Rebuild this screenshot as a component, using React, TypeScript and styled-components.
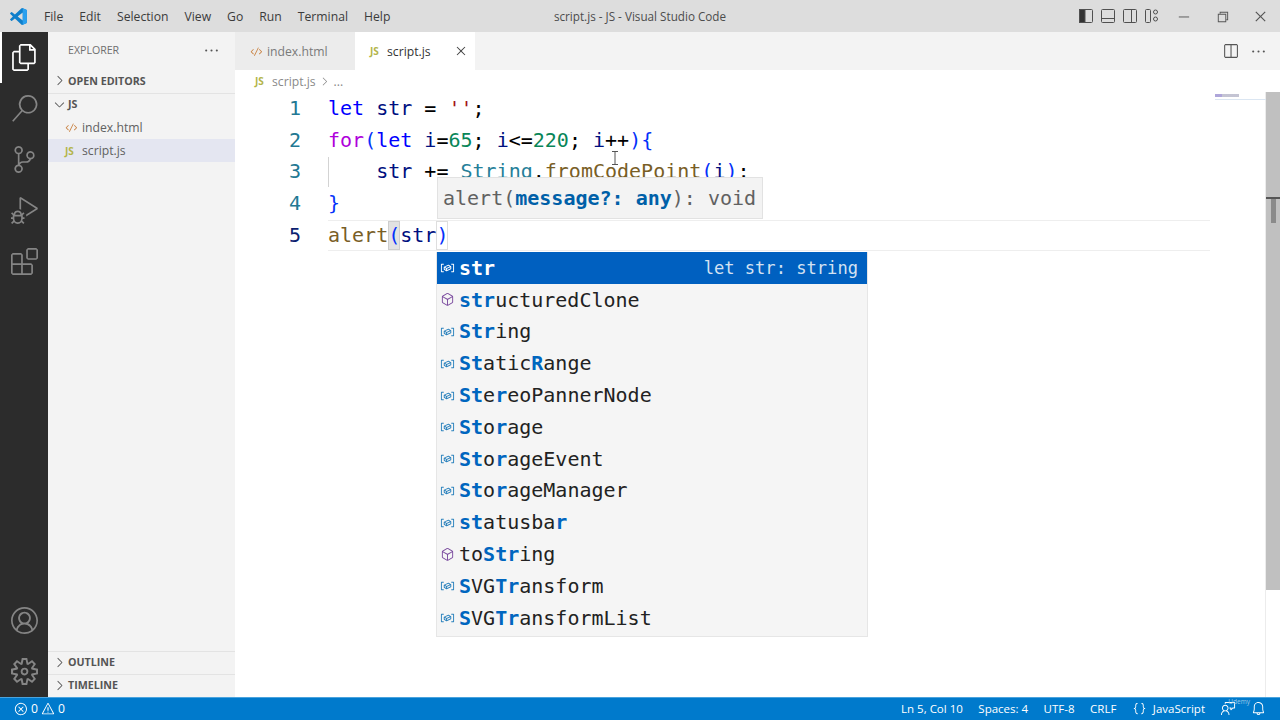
import React from "react"
import styled, { createGlobalStyle } from "styled-components"
import {
  VscFiles,
  VscSearch,
  VscSourceControl,
  VscDebugAlt,
  VscExtensions,
  VscAccount,
  VscSettingsGear,
  VscChevronRight,
  VscChevronDown,
  VscCode,
  VscClose,
  VscEllipsis,
  VscSplitHorizontal,
  VscChromeMinimize,
  VscChromeRestore,
  VscChromeClose,
  VscError,
  VscWarning,
  VscBell,
  VscFeedback,
  VscSymbolVariable,
  VscSymbolMethod,
  VscJson,
} from "react-icons/vsc"

const uiFont = `"Open Sans", "Noto Sans", sans-serif`
const codeFont = `"DejaVu Sans Mono", "Liberation Mono", monospace`
const lineHeight = 31.7

const GlobalStyle = createGlobalStyle`
  html, body {
    margin: 0;
    height: 100%;
    overflow: hidden;
    background: #fff;
    font-family: ${uiFont};
  }
  #root {
    height: 100%;
  }
`

const Shell = styled.div`
  display: grid;
  grid-template-rows: 32px 1fr 23px;
  width: 1280px;
  height: 720px;
  overflow: hidden;
`

const TitleBar = styled.div`
  position: relative;
  display: flex;
  align-items: center;
  background: #dddddd;
  color: #333;
  font-size: 12.2px;
`

const Logo = styled.svg`
  width: 17px;
  height: 17px;
  margin: 0 9px 0 10px;
  flex: none;
`

const MenuItem = styled.span`
  padding: 0 8px;
  color: #3b3b3b;
`

const WindowTitle = styled.div`
  position: absolute;
  left: 0;
  right: 0;
  text-align: center;
  color: #4c4c4c;
  font-size: 11.7px;
  pointer-events: none;
`

const TitleRight = styled.div`
  margin-left: auto;
  display: flex;
  align-items: center;
  color: #444;
`

const LayoutButton = styled.svg`
  width: 16px;
  height: 16px;
  margin-right: 6px;
  fill: none;
  stroke: #505050;
`

const WindowButton = styled.span`
  width: 38.5px;
  display: flex;
  justify-content: center;
  font-size: 15px;
  color: #555;
  &:first-of-type {
    margin-left: -1px;
  }
`

const Main = styled.div`
  display: flex;
  min-height: 0;
`

const ActivityBar = styled.div`
  width: 48px;
  flex: none;
  background: #2c2c2c;
  display: flex;
  flex-direction: column;
  justify-content: space-between;
`

const ActivityGroup = styled.div`
  display: flex;
  flex-direction: column;
`

const ActivityItem = styled.div<{ $active?: boolean }>`
  height: 51px;
  display: flex;
  align-items: center;
  justify-content: center;
  font-size: 27px;
  color: ${({ $active }) => ($active ? "#fff" : "#858585")};
  box-shadow: ${({ $active }) => ($active ? "inset 2px 0 0 #fff" : "none")};
`

const SideBar = styled.div`
  width: 187px;
  flex: none;
  background: #f3f3f3;
  display: flex;
  flex-direction: column;
  color: #616161;
`

const SideTitle = styled.div`
  height: 38px;
  box-sizing: border-box;
  padding: 0 15px 2px 20px;
  display: flex;
  align-items: center;
  justify-content: space-between;
  font-size: 10.6px;
  color: #6f6f6f;
  svg {
    font-size: 17px;
    color: #555;
  }
`

const SectionHeader = styled.div<{ $border?: boolean }>`
  height: 23px;
  display: flex;
  align-items: center;
  gap: 0;
  padding: 0 0 2px 3px;
  font-size: 10.7px;
  font-weight: 700;
  color: #555;
  border-top: ${({ $border }) => ($border ? "1px solid #e3e3e3" : "none")};
  box-sizing: border-box;
  svg {
    font-size: 15px;
    flex: none;
    width: 17px;
  }
`

const FileRow = styled.div<{ $active?: boolean }>`
  height: 23px;
  display: flex;
  align-items: center;
  padding-left: 17px;
  font-size: 12.2px;
  color: #616161;
  background: ${({ $active }) => ($active ? "#e4e6f1" : "transparent")};
`

const FileBadge = styled.span`
  width: 17px;
  display: inline-flex;
  align-items: center;
  font-size: 10px;
  font-weight: 700;
  flex: none;
`

const HtmlBadge = styled(FileBadge)`
  color: #c9803f;
  font-size: 13px;
`

const JsBadge = styled(FileBadge)`
  color: #b3b54a;
`

const SideSpacer = styled.div`
  flex: 1;
`

const Editor = styled.div`
  flex: 1;
  min-width: 0;
  display: flex;
  flex-direction: column;
  background: #fff;
`

const TabBar = styled.div`
  height: 38px;
  flex: none;
  display: flex;
  background: #f3f3f3;
`

const Tab = styled.div<{ $active?: boolean }>`
  width: 120px;
  box-sizing: border-box;
  padding-left: 15px;
  display: flex;
  align-items: center;
  font-size: 12.2px;
  background: ${({ $active }) => ($active ? "#fff" : "#ececec")};
  color: ${({ $active }) => ($active ? "#333" : "#7a7a7a")};
`

const TabClose = styled.span`
  margin-left: auto;
  margin-right: 6px;
  display: flex;
  font-size: 16px;
  color: #444;
`

const TabActions = styled.div`
  margin-left: auto;
  display: flex;
  align-items: center;
  gap: 11px;
  padding-right: 13px;
  font-size: 17px;
  color: #555;
`

const Breadcrumbs = styled.div`
  height: 22px;
  flex: none;
  display: flex;
  align-items: center;
  padding-left: 20px;
  font-size: 12.2px;
  color: #8a8a8a;
  svg {
    font-size: 13px;
    margin: 0 3px 0 2px;
  }
`

const CodeArea = styled.div`
  position: relative;
  flex: 1;
  min-height: 0;
  display: flex;
`

const CodeLines = styled.div`
  flex: 1;
  min-width: 0;
  padding-top: 1px;
  font-family: ${codeFont};
  font-size: 20px;
`

const LineRow = styled.div`
  display: flex;
  height: ${lineHeight}px;
  line-height: ${lineHeight}px;
  white-space: pre;
`

const LineNumber = styled.span<{ $active?: boolean }>`
  width: 66px;
  flex: none;
  text-align: right;
  color: ${({ $active }) => ($active ? "#0b216f" : "#237893")};
`

const LineCode = styled.span<{ $current?: boolean; $guide?: boolean }>`
  margin-left: 27px;
  flex: 1;
  box-sizing: border-box;
  margin-right: 56px;
  border: 1px solid ${({ $current }) => ($current ? "#eeeeee" : "transparent")};
  border-width: 1px 0;
  box-shadow: ${({ $guide }) => ($guide ? "inset 1px 0 0 #d3d3d3" : "none")};
  line-height: ${lineHeight - 2}px;
`

const Kw = styled.span`
  color: #0000ff;
`
const Ctl = styled.span`
  color: #af00db;
`
const Var = styled.span`
  color: #001080;
`
const Str = styled.span`
  color: #a31515;
`
const Num = styled.span`
  color: #098658;
`
const Cls = styled.span`
  color: #267f99;
`
const Fn = styled.span`
  color: #795e26;
`
const Brace = styled.span`
  color: #0431fa;
`
const Plain = styled.span`
  color: #000;
`
const MatchBrace = styled(Brace)`
  display: inline-block;
  height: 29px;
  background: #e2e2e2;
  box-shadow: inset 0 0 0 1px #cdcdcd;
`
const MatchBraceEnd = styled(Brace)`
  display: inline-block;
  height: 29px;
  box-shadow: inset 0 0 0 1px #dedede;
`

const ParamHint = styled.div`
  position: absolute;
  left: 202px;
  top: 85px;
  width: 326px;
  height: 42px;
  padding: 0 5px;
  display: flex;
  align-items: center;
  white-space: pre;
  background: #f3f3f3;
  border: 1px solid #e2e2e2;
  box-sizing: border-box;
  font-family: ${codeFont};
  font-size: 20px;
  color: #616161;
`

const ParamActive = styled.b`
  color: #0060a8;
`

const SuggestList = styled.div`
  position: absolute;
  left: 201px;
  top: 160px;
  width: 432px;
  padding-bottom: 2px;
  background: #f5f5f5;
  border: 1px solid #e6e6e6;
  border-top: 0;
  box-sizing: border-box;
  font-family: ${codeFont};
  font-size: 20px;
`

const SuggestRow = styled.div<{ $selected?: boolean }>`
  height: 31.8px;
  display: flex;
  align-items: center;
  white-space: pre;
  background: ${({ $selected }) => ($selected ? "#0060c0" : "transparent")};
  color: ${({ $selected }) => ($selected ? "#fff" : "#222")};
`

const SuggestIcon = styled.span<{ $selected?: boolean; $kind: "var" | "method" }>`
  width: 21px;
  margin-right: 1px;
  flex: none;
  display: flex;
  justify-content: center;
  font-size: 15px;
  color: ${({ $selected, $kind }) =>
    $selected ? "#fff" : $kind === "var" ? "#2b82bd" : "#7a4a9e"};
`

const Highlight = styled.b<{ $selected?: boolean }>`
  color: ${({ $selected }) => ($selected ? "#fff" : "#0066bf")};
`

const SuggestDetail = styled.span`
  margin-left: auto;
  padding-right: 9px;
  color: #d4e2f2;
  font-size: 17.1px;
`

const Minimap = styled.div`
  position: absolute;
  left: 980px;
  top: 0;
  width: 51px;
  height: 7px;
  border-bottom: 1px solid #dbe6f2;
`

const MinimapInk = styled.span`
  display: block;
  width: 24px;
  height: 3px;
  background: linear-gradient(90deg, #9a8fd0 0 30%, #b5b5c8 30% 100%);
  opacity: 0.8;
  margin-top: 2px;
`

const ScrollTrack = styled.div`
  width: 14px;
  flex: none;
  box-shadow: -1px 0 0 #ececec;
`

const OverviewRuler = styled.div`
  height: 498px;
  background: #c0c0c0;
  position: relative;
`

const RulerMark = styled.div`
  position: absolute;
  left: 0;
  right: 0;
  top: 105px;
  height: 2px;
  background: #555;
`

const RulerThumb = styled.div`
  position: absolute;
  left: 5px;
  width: 5px;
  top: 107px;
  height: 24px;
  background: #8a8a8a;
`

const IBeam = styled.svg`
  position: absolute;
  left: 376px;
  top: 59px;
  width: 8px;
  height: 14px;
`

const StatusBar = styled.div`
  position: relative;
  background: #007acc;
  color: #fff;
  display: flex;
  align-items: center;
  font-size: 11.5px;
  padding: 0 14px;
  box-shadow: inset 0 1px 0 #4aa3dd;
`

const StatusGroup = styled.div`
  display: flex;
  align-items: center;
  gap: 3px;
  font-size: 12.2px;
  svg {
    font-size: 14px;
  }
`

const StatusRight = styled.div`
  margin-left: auto;
  display: flex;
  align-items: center;
  gap: 15.5px;
  svg {
    font-size: 15px;
  }
`

const StatusIcon = styled.span`
  display: flex;
  align-items: center;
  gap: 6px;
`

const Watermark = styled.span`
  position: absolute;
  right: 30px;
  top: 0;
  font-size: 6.5px;
  color: #9cc9e8;
`

// "[st]r" style strings, brackets mark the matched letters
function renderMatch(label: string, selected?: boolean) {
  return label.split(/(\[[^\]]+\])/).map((part, i) =>
    part.startsWith("[") ? (
      <Highlight key={i} $selected={selected}>
        {part.slice(1, -1)}
      </Highlight>
    ) : (
      <span key={i}>{part}</span>
    ),
  )
}

const suggestions: { label: string; kind: "var" | "method" }[] = [
  { label: "[str]", kind: "var" },
  { label: "[str]ucturedClone", kind: "method" },
  { label: "[Str]ing", kind: "var" },
  { label: "[St]atic[R]ange", kind: "var" },
  { label: "[St]e[r]eoPannerNode", kind: "var" },
  { label: "[St]o[r]age", kind: "var" },
  { label: "[St]o[r]ageEvent", kind: "var" },
  { label: "[St]o[r]ageManager", kind: "var" },
  { label: "[st]atusba[r]", kind: "var" },
  { label: "to[Str]ing", kind: "method" },
  { label: "[S]VG[Tr]ansform", kind: "var" },
  { label: "[S]VG[Tr]ansformList", kind: "var" },
]

const menus = ["File", "Edit", "Selection", "View", "Go", "Run", "Terminal", "Help"]

export default function App() {
  return (
    <>
      <GlobalStyle />
      <Shell>
        <TitleBar>
          <Logo viewBox="0 0 100 100">
            <path
              fill="#0f7fcb"
              fillRule="evenodd"
              d="M96 11 75 1a6 6 0 0 0-7 1L29 38 12 25a4 4 0 0 0-5 0L2 30a4 4 0 0 0 0 6l15 14L2 64a4 4 0 0 0 0 6l5 5a4 4 0 0 0 5 0l17-13 39 36a6 6 0 0 0 7 1l21-10a6 6 0 0 0 3-5V16a6 6 0 0 0-3-5zM75 73 45 50l30-23z"
            />
            <path fill="#2aa0ee" d="M75 1 96 11a6 6 0 0 1 3 5v68a6 6 0 0 1-3 5L75 99z" />
          </Logo>
          {menus.map((m) => (
            <MenuItem key={m}>{m}</MenuItem>
          ))}
          <WindowTitle>script.js - JS - Visual Studio Code</WindowTitle>
          <TitleRight>
            <LayoutButton viewBox="0 0 16 16">
              <rect x="1.5" y="1.5" width="13" height="13" rx="1" />
              <rect x="1.5" y="1.5" width="5.5" height="13" fill="#333" />
            </LayoutButton>
            <LayoutButton viewBox="0 0 16 16">
              <rect x="1.5" y="1.5" width="13" height="13" rx="1" />
              <path d="M1.5 10.5h13" />
            </LayoutButton>
            <LayoutButton viewBox="0 0 16 16">
              <rect x="1.5" y="1.5" width="13" height="13" rx="1" />
              <path d="M9.5 1.5v13" />
            </LayoutButton>
            <LayoutButton viewBox="0 0 16 16">
              <rect x="1.5" y="1.5" width="5" height="13" rx="1" />
              <circle cx="11.5" cy="4" r="2" />
              <circle cx="11.5" cy="11" r="2" />
            </LayoutButton>
            <WindowButton>
              <VscChromeMinimize />
            </WindowButton>
            <WindowButton>
              <VscChromeRestore />
            </WindowButton>
            <WindowButton>
              <VscChromeClose />
            </WindowButton>
          </TitleRight>
        </TitleBar>

        <Main>
          <ActivityBar>
            <ActivityGroup>
              <ActivityItem $active>
                <VscFiles />
              </ActivityItem>
              <ActivityItem>
                <VscSearch />
              </ActivityItem>
              <ActivityItem>
                <VscSourceControl />
              </ActivityItem>
              <ActivityItem>
                <VscDebugAlt />
              </ActivityItem>
              <ActivityItem>
                <VscExtensions />
              </ActivityItem>
            </ActivityGroup>
            <ActivityGroup>
              <ActivityItem>
                <VscAccount />
              </ActivityItem>
              <ActivityItem>
                <VscSettingsGear />
              </ActivityItem>
            </ActivityGroup>
          </ActivityBar>

          <SideBar>
            <SideTitle>
              EXPLORER
              <VscEllipsis />
            </SideTitle>
            <SectionHeader>
              <VscChevronRight />
              OPEN EDITORS
            </SectionHeader>
            <SectionHeader $border>
              <VscChevronDown />
              JS
            </SectionHeader>
            <FileRow>
              <HtmlBadge>
                <VscCode />
              </HtmlBadge>
              index.html
            </FileRow>
            <FileRow $active>
              <JsBadge>JS</JsBadge>
              script.js
            </FileRow>
            <SideSpacer />
            <SectionHeader $border>
              <VscChevronRight />
              OUTLINE
            </SectionHeader>
            <SectionHeader $border>
              <VscChevronRight />
              TIMELINE
            </SectionHeader>
          </SideBar>

          <Editor>
            <TabBar>
              <Tab>
                <HtmlBadge>
                  <VscCode />
                </HtmlBadge>
                index.html
              </Tab>
              <Tab $active>
                <JsBadge>JS</JsBadge>
                script.js
                <TabClose>
                  <VscClose />
                </TabClose>
              </Tab>
              <TabActions>
                <VscSplitHorizontal />
                <VscEllipsis />
              </TabActions>
            </TabBar>
            <Breadcrumbs>
              <JsBadge>JS</JsBadge>
              script.js
              <VscChevronRight />
              ...
            </Breadcrumbs>
            <CodeArea>
              <CodeLines>
                <LineRow>
                  <LineNumber>1</LineNumber>
                  <LineCode>
                    <Kw>let</Kw> <Var>str</Var> <Plain>=</Plain> <Str>''</Str>
                    <Plain>;</Plain>
                  </LineCode>
                </LineRow>
                <LineRow>
                  <LineNumber>2</LineNumber>
                  <LineCode>
                    <Ctl>for</Ctl>
                    <Brace>(</Brace>
                    <Kw>let</Kw> <Var>i</Var>
                    <Plain>=</Plain>
                    <Num>65</Num>
                    <Plain>;</Plain> <Var>i</Var>
                    <Plain>&lt;=</Plain>
                    <Num>220</Num>
                    <Plain>;</Plain> <Var>i</Var>
                    <Plain>++</Plain>
                    <Brace>){"{"}</Brace>
                  </LineCode>
                </LineRow>
                <LineRow>
                  <LineNumber>3</LineNumber>
                  <LineCode $guide>
                    {"    "}
                    <Var>str</Var> <Plain>+=</Plain> <Cls>String</Cls>
                    <Plain>.</Plain>
                    <Fn>fromCodePoint</Fn>
                    <Brace>(</Brace>
                    <Var>i</Var>
                    <Brace>)</Brace>
                    <Plain>;</Plain>
                  </LineCode>
                </LineRow>
                <LineRow>
                  <LineNumber>4</LineNumber>
                  <LineCode>
                    <Brace>{"}"}</Brace>
                  </LineCode>
                </LineRow>
                <LineRow>
                  <LineNumber $active>5</LineNumber>
                  <LineCode $current>
                    <Fn>alert</Fn>
                    <MatchBrace>(</MatchBrace>
                    <Var>str</Var>
                    <MatchBraceEnd>)</MatchBraceEnd>
                  </LineCode>
                </LineRow>
              </CodeLines>
              <ScrollTrack>
                <OverviewRuler>
                  <RulerMark />
                  <RulerThumb />
                </OverviewRuler>
              </ScrollTrack>

              <Minimap>
                <MinimapInk />
              </Minimap>
              <IBeam viewBox="0 0 8 14" fill="none" stroke="#555" strokeWidth="1">
                <path d="M1 .5h6M4 .5v13M1 13.5h6" />
              </IBeam>
              <ParamHint>
                alert(<ParamActive>message?: any</ParamActive>): void
              </ParamHint>
              <SuggestList>
                {suggestions.map((s, i) => (
                  <SuggestRow key={s.label} $selected={i === 0}>
                    <SuggestIcon $selected={i === 0} $kind={s.kind}>
                      {s.kind === "var" ? <VscSymbolVariable /> : <VscSymbolMethod />}
                    </SuggestIcon>
                    <span>{renderMatch(s.label, i === 0)}</span>
                    {i === 0 && <SuggestDetail>let str: string</SuggestDetail>}
                  </SuggestRow>
                ))}
              </SuggestList>
            </CodeArea>
          </Editor>
        </Main>

        <StatusBar>
          <StatusGroup>
            <VscError />0 <VscWarning />0
          </StatusGroup>
          <StatusRight>
            <span>Ln 5, Col 10</span>
            <span>Spaces: 4</span>
            <span>UTF-8</span>
            <span>CRLF</span>
            <StatusIcon>
              <VscJson />
              JavaScript
            </StatusIcon>
            <StatusIcon>
              <VscFeedback />
            </StatusIcon>
            <StatusIcon>
              <VscBell />
            </StatusIcon>
          </StatusRight>
          <Watermark>Udemy</Watermark>
        </StatusBar>
      </Shell>
    </>
  )
}
